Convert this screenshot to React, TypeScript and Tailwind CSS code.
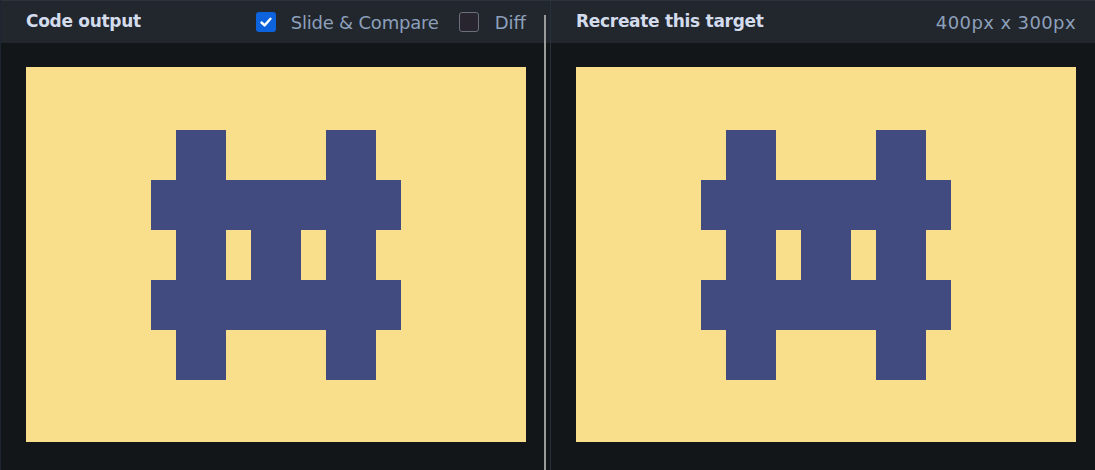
import React from 'react';

const Shape = () => (
  <svg width="500" height="375" viewBox="0 0 500 375" className="block">
    <rect width="500" height="375" fill="#f9de8b" />
    <g fill="#414b80">
      <rect x="150" y="63" width="50" height="250" />
      <rect x="300" y="63" width="50" height="250" />
      <rect x="125" y="113" width="250" height="50" />
      <rect x="125" y="213" width="250" height="50" />
      <rect x="225" y="163" width="50" height="50" />
    </g>
  </svg>
);

const Check = ({ on }: { on: boolean }) =>
  on ? (
    <span className="flex h-5 w-5 items-center justify-center rounded-[3px] bg-[#0c63dd]">
      <svg width="14" height="14" viewBox="0 0 14 14">
        <polyline points="2.5,7.5 5.6,10.4 11.5,3.8" fill="none" stroke="#fff" strokeWidth="2.4" strokeLinecap="round" strokeLinejoin="round" />
      </svg>
    </span>
  ) : (
    <span className="h-5 w-5 rounded-[3px] border border-[#6b6f78] bg-[#28252e]" />
  );

const App = () => {
  return (
    <div className="relative flex h-[470px] w-[1095px] bg-[#131619] font-['DejaVu_Sans',sans-serif]">
      <div className="flex w-[550px] flex-col border-l border-[#1c2530]">
        <div className="flex h-[43px] items-center border-t border-[#2c333c] bg-[#22262d] pl-[25px] pr-[24px]">
          <span className="text-[17px] font-bold tracking-[-0.3px] text-[#d3dcec]">Code output</span>
          <label className="ml-auto flex items-center gap-[15px]">
            <Check on />
            <span className="text-[18px] tracking-[-0.2px] text-[#8da0bb]">Slide &amp; Compare</span>
          </label>
          <label className="ml-[20px] flex items-center gap-[16px]">
            <Check on={false} />
            <span className="text-[18px] text-[#8da0bb]">Diff</span>
          </label>
        </div>
        <div className="pl-[25px] pt-[24px]">
          <Shape />
        </div>
      </div>
      <div className="flex flex-1 flex-col border-l border-[#27313c]">
        <div className="flex h-[43px] items-center border-t border-[#2c333c] bg-[#22262d] pl-[25px] pr-[19px]">
          <span className="text-[17px] font-bold tracking-[-0.3px] text-[#d3dcec]">Recreate this target</span>
          <span className="ml-auto text-[18px] tracking-[0.4px] text-[#8da0bb]">400px x 300px</span>
        </div>
        <div className="pl-[25px] pt-[24px]">
          <Shape />
        </div>
      </div>
      <div className="absolute bottom-0 left-[544px] top-[15px] w-[2px] bg-[#9b9b9b]" />
    </div>
  );
};

export default App;
